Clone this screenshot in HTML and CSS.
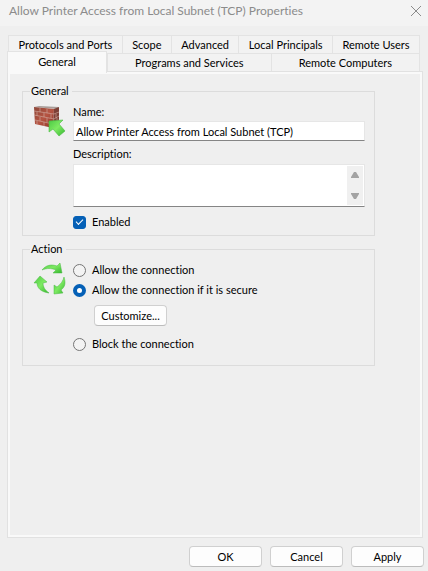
FILE: index.html
```html
<!DOCTYPE html>
<html lang="en">
<head>
<meta charset="utf-8">
<meta name="viewport" content="width=device-width, initial-scale=1">
<title>Allow Printer Access from Local Subnet (TCP) Properties</title>
<link rel="stylesheet" href="styles.css">
</head>
<body>
<form class="dialog">
  <header class="titlebar">
    <h1 class="title">Allow Printer Access from Local Subnet (TCP) Properties</h1>
    <button class="close" type="button" aria-label="Close">
      <svg width="12" height="12" viewBox="0 0 12 12" fill="none" stroke="#8b8b8b"><path d="M1 1l10 10M11 1L1 11"/></svg>
    </button>
  </header>

  <nav class="tabs" role="tablist">
    <div class="tab-row tab-row-back">
      <button class="tab" type="button" role="tab">Protocols and Ports</button>
      <button class="tab" type="button" role="tab">Scope</button>
      <button class="tab" type="button" role="tab">Advanced</button>
      <button class="tab" type="button" role="tab">Local Principals</button>
      <button class="tab" type="button" role="tab">Remote Users</button>
    </div>
    <div class="tab-row tab-row-front">
      <button class="tab selected" type="button" role="tab" aria-selected="true">General</button>
      <button class="tab" type="button" role="tab">Programs and Services</button>
      <button class="tab" type="button" role="tab">Remote Computers</button>
    </div>
  </nav>

  <main class="panel" role="tabpanel">
    <fieldset class="group">
      <legend>General</legend>
      <div class="group-body">
        <svg class="icon" width="34" height="34" viewBox="0 0 34 34">
          <defs>
            <linearGradient id="brick" x1="0" y1="0" x2="1" y2="1"><stop offset="0" stop-color="#8c4638"/><stop offset=".5" stop-color="#b65543"/><stop offset="1" stop-color="#8c3428"/></linearGradient>
            <linearGradient id="leaf" x1="0" y1="0" x2="1" y2="1"><stop offset="0" stop-color="#4cc944"/><stop offset=".5" stop-color="#7eea62"/><stop offset="1" stop-color="#35b62f"/></linearGradient>
          </defs>
          <path d="M1 2l5-1 20 1-2 2z" fill="#a79c98"/>
          <path d="M1 2l20 2-1 19L2 19z" fill="url(#brick)"/>
          <path d="M21 4l5-2v17l-6 4z" fill="#7d4036"/>
          <path d="M1 6l20 3 5-2M1 10l20 4 5-3M2 15l18 4 6-4M7 3v4M14 4v4M4 7v4M11 8v4M18 9v4M7 12v4M14 13v4M4 16v3M11 17v4M17 18v4M23 9v4M24 13v4" fill="none" stroke="#cfa398" stroke-width=".7"/>
          <path d="M16 16l14-1-4 4 6 7-6 5-6-7-4 3z" fill="url(#leaf)" stroke="#4ab945" stroke-width=".6" stroke-linejoin="round"/>
        </svg>
        <div class="fields">
          <label for="rule-name">Name:</label>
          <input class="text-input" id="rule-name" type="text" value="Allow Printer Access from Local Subnet (TCP)">
          <label class="description-label" for="description">Description:</label>
          <div class="memo">
            <textarea id="description"></textarea>
            <div class="scrollbar" aria-hidden="true">
              <svg width="10" height="8" viewBox="0 0 10 8"><path d="M4 1h2l3 5v1H1V6z" fill="#a3a3a3"/></svg>
              <svg width="10" height="8" viewBox="0 0 10 8"><path d="M1 1h8v1L6 7H4L1 2z" fill="#a3a3a3"/></svg>
            </div>
          </div>
          <label class="choice enabled"><input type="checkbox" checked>Enabled</label>
        </div>
      </div>
    </fieldset>

    <fieldset class="group">
      <legend>Action</legend>
      <div class="group-body">
        <svg class="icon" width="34" height="34" viewBox="0 0 34 34">
          <g fill="url(#leaf)" stroke="#4ab945" stroke-width=".5" stroke-linejoin="round">
            <path d="M9 7C13 2 18 1 24 3l3-3 2 10-9 0 3-3C18 5 14 5 9 7z"/>
            <path d="M31 14c2 6 1 10-3 13l2 3-9 1 0-9 3 2c4-3 6-6 7-10z"/>
            <path d="M16 30C8 29 4 25 4 20H1l6-7 7 6-4 1c0 4 2 7 6 10z"/>
          </g>
        </svg>
        <div class="fields actions">
          <label class="choice"><input type="radio" name="action">Allow the connection</label>
          <label class="choice"><input type="radio" name="action" checked>Allow the connection if it is secure</label>
          <button class="button customize" type="button">Customize...</button>
          <label class="choice"><input type="radio" name="action">Block the connection</label>
        </div>
      </div>
    </fieldset>
  </main>

  <footer class="footer">
    <button class="button" type="button">OK</button>
    <button class="button" type="button">Cancel</button>
    <button class="button" type="button">Apply</button>
  </footer>
</form>
</body>
</html>
```
FILE: styles.css
```css
* {
  box-sizing: border-box;
}

body {
  margin: 0;
  background: #efefef;
  color: #000;
  font: 11px/14px Lato, "Liberation Sans", sans-serif;
  font-variant-ligatures: none;
}

button,
input,
textarea {
  margin: 0;
  color: inherit;
  font: inherit;
  font-variant-ligatures: none;
}

.dialog {
  display: flex;
  flex-direction: column;
  min-height: 100vh;
}

.titlebar {
  display: flex;
  align-items: center;
  justify-content: space-between;
  height: 26px;
  padding: 0 6px 4px 9px;
  background: #f3f3f3;
}

.title {
  margin: 0;
  color: #8b8b8b;
  font: 12px/16px Lato, "Open Sans", sans-serif;
  font-variant-ligatures: none;
  white-space: nowrap;
}

.close {
  display: flex;
  padding: 0;
  border: 0;
  background: none;
}

.tabs {
  padding: 9px 7px 0;
}

.tab-row {
  display: flex;
}

.tab-row-back {
  margin: 0 1px;
}

.tab-row-front {
  margin-right: 1px;
}

.tab {
  flex: 1 1 auto;
  height: 18px;
  padding: 0 8px;
  border: 1px solid #e3e3e3;
  border-width: 1px 0 0 1px;
  background: #f2f2f2;
  white-space: nowrap;
}

.tab:last-child {
  border-right-width: 1px;
}

.tab.selected {
  position: relative;
  flex: 0 0 100px;
  height: 22px;
  margin: -2px 0;
  padding-bottom: 2px;
  border-right-width: 1px;
  background: #f9f9f9;
}

.panel {
  flex: 1;
  display: flex;
  flex-direction: column;
  gap: 6px;
  margin: 0 5px 0 7px;
  padding: 12px 45px 10px 12px;
  border: 1px solid #e1e1e1;
  box-shadow: inset 0 0 0 2px #f9f9f9;
}

.group {
  min-width: 0;
  margin: 0 2px;
  padding: 0 9px 6px 7px;
  border: 1px solid #dcdcdc;
}

.group legend {
  padding: 0 3px 0 1px;
}

.group-body {
  display: flex;
  gap: 6px;
  padding: 7px 0 0 3px;
}

.icon {
  flex: none;
}

.fields {
  flex: 1;
  display: flex;
  flex-direction: column;
  align-items: flex-start;
}

.text-input {
  width: 100%;
  height: 20px;
  margin-top: 2px;
  padding: 0 2px;
  border: 1px solid #e6e6e6;
  border-bottom-color: #858585;
  background: #fff;
}

.description-label {
  margin-top: 6px;
}

.memo {
  display: flex;
  width: 100%;
  height: 43px;
  margin-top: 3px;
  padding: 1px;
  border: 1px solid #e6e6e6;
  border-bottom-color: #858585;
  background: #fff;
}

.memo textarea {
  flex: 1;
  min-width: 0;
  padding: 0 2px;
  border: 0;
  outline: 0;
  background: none;
  resize: none;
}

.scrollbar {
  display: flex;
  flex-direction: column;
  align-items: center;
  justify-content: space-between;
  width: 16px;
  padding: 5px 0;
  background: #f0f0f0;
}

.choice {
  display: flex;
  align-items: center;
  gap: 6px;
}

.choice input {
  appearance: none;
  width: 13px;
  height: 13px;
  border: 1px solid #757575;
  border-radius: 50%;
  background: #f3f3f3;
}

.choice input[type="radio"]:checked {
  border: 4px solid #0560b6;
  background: #fff;
}

.choice input[type="checkbox"] {
  display: grid;
  place-items: center;
  border-color: #0560b6;
  border-radius: 3px;
  background: #0560b6;
}

.choice input[type="checkbox"]:checked::before {
  content: "";
  width: 6px;
  height: 3px;
  margin-bottom: 2px;
  border: solid #fff;
  border-width: 0 0 1px 1px;
  transform: rotate(-45deg);
}

.enabled {
  margin-top: 8px;
}

.actions {
  gap: 6px;
  padding-bottom: 8px;
}

.button {
  width: 73px;
  height: 21px;
  padding: 0;
  border: 1px solid #d0d0d0;
  border-bottom-color: #bcbcbc;
  border-radius: 4px;
  background: #fdfdfd;
}

.customize {
  margin: 2px 0 5px 21px;
}

.footer {
  display: flex;
  justify-content: flex-end;
  gap: 8px;
  padding: 8px 4px 4px;
}
```
